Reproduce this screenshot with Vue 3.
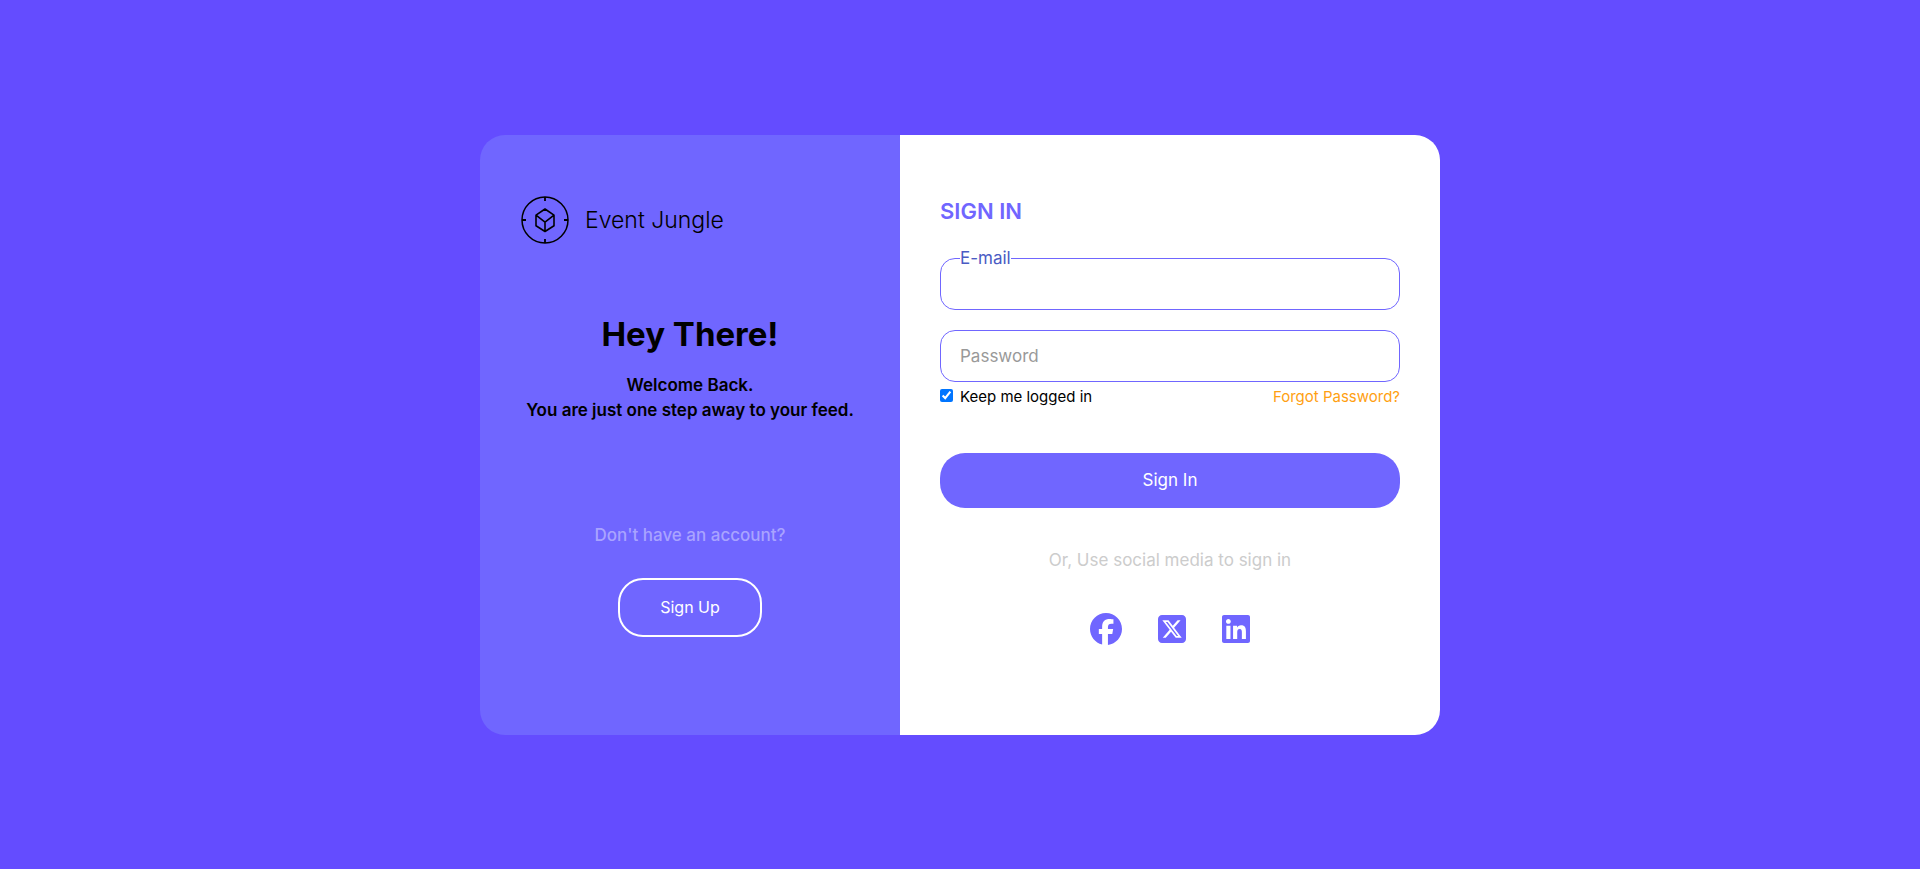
<script setup>
import { ref } from 'vue'

const email = ref('')
const password = ref('')
const keep = ref(true)

const socials = [
  {
    name: 'Facebook',
    box: '0 0 512 512',
    wide: true,
    path: 'M512 256C512 114.6 397.4 0 256 0S0 114.6 0 256C0 376 82.7 476.8 194.2 504.5V334.2H141.4V256h52.8V222.3c0-87.1 39.4-127.5 125-127.5c16.2 0 44.2 3.2 55.7 6.4V172c-6-.6-16.5-1-29.6-1c-42 0-58.2 15.9-58.2 57.2V256h83.6l-14.4 78.2H287V510.1C413.8 494.8 512 386.9 512 256h0z',
  },
  {
    name: 'X',
    box: '0 0 448 512',
    wide: false,
    path: 'M64 32C28.7 32 0 60.7 0 96V416c0 35.3 28.7 64 64 64H384c35.3 0 64-28.7 64-64V96c0-35.3-28.7-64-64-64H64zm297.1 84L257.3 234.6 379.4 396H283.8L209 298.1 123.3 396H75.8l111-126.9L69.7 116h98l67.7 89.5L313.6 116h47.5zM323.3 367.6L153.4 142.9H125.1L296.9 367.6h26.3z',
  },
  {
    name: 'LinkedIn',
    box: '0 0 448 512',
    wide: false,
    path: 'M416 32H31.9C14.3 32 0 46.5 0 64.3v383.4C0 465.5 14.3 480 31.9 480H416c17.6 0 32-14.5 32-32.3V64.3c0-17.8-14.4-32.3-32-32.3zM135.4 416H69V202.2h66.5V416zm-33.2-243c-21.3 0-38.5-17.3-38.5-38.5S80.9 96 102.2 96c21.2 0 38.5 17.3 38.5 38.5 0 21.3-17.2 38.5-38.5 38.5zm282.1 243h-66.4V312c0-24.8-.5-56.7-34.5-56.7-34.6 0-39.9 27-39.9 54.9V416h-66.4V202.2h63.7v29.2h.9c8.9-16.8 30.6-34.5 62.2-34.5 66.5 0 78.9 43.8 78.9 100.9V416z',
  },
]
</script>

<template>
  <main class="page">
    <div class="card">
      <section class="welcome">
        <div class="brand">
          <svg class="logo" viewBox="0 0 50 50" fill="none" stroke="#000" aria-hidden="true">
            <circle cx="25" cy="25" r="23" stroke-width="1.5" />
            <path d="M25 2v4M25 44v4M2 25h4M44 25h4" stroke-width="1.8" />
            <path
              d="M25 14l9 6.2v10.6L25 36.500l-9-5.700V20.200zM16 20.200l9 7 9-7M25 27.200v9"
              stroke-width="1.6"
              stroke-linejoin="round"
            />
          </svg>
          <span class="brand-name">Event Jungle</span>
        </div>
        <h1 class="greeting">Hey There!</h1>
        <p class="lead">Welcome Back.<br />You are just one step away to your feed.</p>
        <p class="ask">Don't have an account?</p>
        <button type="button" class="sign-up">Sign Up</button>
      </section>

      <form class="sign-in" @submit.prevent>
        <h2 class="title">SIGN IN</h2>
        <div class="field">
          <label for="email" class="floating">E-mail</label>
          <input id="email" v-model="email" type="email" class="box" />
        </div>
        <div class="field">
          <input
            id="password"
            v-model="password"
            type="password"
            class="box"
            placeholder="Password"
            aria-label="Password"
          />
        </div>
        <div class="options">
          <label class="keep" for="keep">
            <input id="keep" v-model="keep" type="checkbox" class="tick" />
            <span>Keep me logged in</span>
          </label>
          <a href="#" class="forgot">Forgot Password?</a>
        </div>
        <button type="submit" class="submit">Sign In</button>
        <p class="or">Or, Use social media to sign in</p>
        <nav class="socials">
          <a v-for="s in socials" :key="s.name" href="#" class="social" :aria-label="s.name">
            <svg :viewBox="s.box" class="icon" :class="{ wide: s.wide }"><path :d="s.path" /></svg>
          </a>
        </nav>
      </form>
    </div>
  </main>
</template>

<style>
body {
  margin: 0;
  background: #644cff;
}
</style>

<style scoped>
.page {
  min-height: 100vh;
  display: flex;
  align-items: center;
  justify-content: center;
  font-family: Inter, 'Open Sans', sans-serif;
  font-size: 17px;
  line-height: 24px;
  color: #000;
  background: #644cff;
}
.page * {
  box-sizing: border-box;
}
h1,
h2,
p {
  margin: 0;
}
.card {
  width: 50%;
  min-width: 800px;
  min-height: 600px;
  display: grid;
  grid-template-columns: 7fr 9fr;
}
.welcome {
  display: flex;
  flex-direction: column;
  align-items: center;
  padding: 60px 40px;
  border-radius: 25px 0 0 25px;
  background: #7066ff;
}
.brand {
  align-self: flex-start;
  display: flex;
  align-items: center;
  gap: 15px;
}
.logo {
  width: 50px;
  height: 50px;
}
.brand-name {
  font-size: 23px;
  line-height: 32px;
  font-weight: 300;
}
.greeting {
  margin-top: 65px;
  font-size: 33px;
  line-height: 48px;
  font-weight: 700;
}
.lead {
  margin-top: 15px;
  line-height: 25px;
  font-weight: 600;
  text-align: center;
  white-space: nowrap;
}
.ask {
  margin-top: 100px;
  font-weight: 500;
  color: #a9a3ff;
}
.sign-up {
  margin-top: 31px;
  width: 144px;
  height: 59px;
  border: 2px solid #fff;
  border-radius: 25px;
  background: none;
  color: #fff;
  font: inherit;
  font-size: 16px;
}
.sign-in {
  display: flex;
  flex-direction: column;
  padding: 60px 40px;
  border-radius: 0 25px 25px 0;
  background: #fff;
}
.title {
  font-size: 22px;
  line-height: 32px;
  font-weight: 600;
  color: #7066ff;
}
.field {
  position: relative;
  margin-top: 20px;
}
.title + .field {
  margin-top: 31px;
}
.box {
  display: block;
  width: 100%;
  height: 52px;
  padding: 0 19px;
  border: 1px solid #7066ff;
  border-radius: 15px;
  background: #fff;
  font: inherit;
  outline: none;
}
.box::placeholder {
  color: #999;
  opacity: 1;
}
.floating {
  position: absolute;
  top: -12px;
  left: 20px;
  background: #fff;
  color: #4a5bc4;
}
.options {
  display: flex;
  justify-content: space-between;
  margin-top: 3px;
  font-size: 15px;
}
.keep {
  display: flex;
  align-items: center;
  gap: 7px;
}
.tick {
  width: 13px;
  height: 13px;
  margin: 0 0 3px;
}
.forgot {
  color: #ffa011;
  text-decoration: none;
}
.submit {
  margin-top: 44px;
  height: 55px;
  border: 0;
  border-radius: 25px;
  background: #7066ff;
  color: #fff;
  font: inherit;
}
.or {
  margin-top: 40px;
  text-align: center;
  color: #ccc;
}
.socials {
  display: flex;
  justify-content: center;
  gap: 36px;
  margin-top: 41px;
}
.social {
  display: flex;
}
.icon {
  width: 28px;
  height: 32px;
  fill: #7066ff;
}
.icon.wide {
  width: 32px;
}
</style>
